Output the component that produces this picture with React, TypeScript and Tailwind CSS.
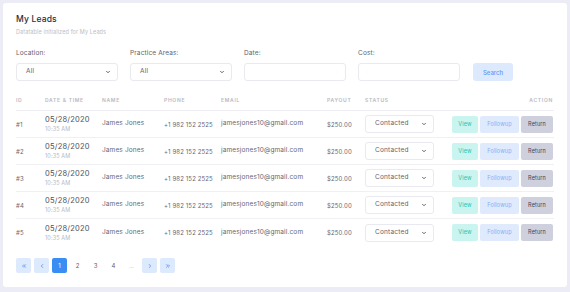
import { ChevronDown, ChevronLeft, ChevronRight, ChevronsLeft, ChevronsRight } from "lucide-react"

const leads = [1, 2, 3, 4, 5].map((n) => ({
  id: `#${n}`,
  date: "05/28/2020",
  time: "10:35 AM",
  name: "James Jones",
  phone: "+1 982 152 2525",
  email: "jamesjones10@gmail.com",
  payout: "$250.00",
  status: "Contacted",
}))

const cols = "grid grid-cols-[29px_57px_62px_57px_106px_38px_87px_101px] items-center"

function FakeSelect({ value, className }: { value: string; className?: string }) {
  return (
    <div
      className={`flex h-[18px] items-center justify-between rounded-[3px] border border-[#e9e9f0] bg-white pl-[9px] pr-[6px] text-[6.5px] tracking-[0.03em] text-[#62626e] ${className ?? ""}`}
    >
      <span>{value}</span>
      <ChevronDown className="h-[6px] w-[6px] text-[#333]" strokeWidth={3} />
    </div>
  )
}

function Field({ label, children }: { label: string; children: React.ReactNode }) {
  return (
    <div className="flex w-[102px] flex-none flex-col gap-[5px]">
      <span className="h-[10px] text-[6.5px] leading-[10px] tracking-[0.02em] text-[#62626e]">{label}</span>
      {children}
    </div>
  )
}

function PageBtn({ children }: { children: React.ReactNode }) {
  return (
    <button className="flex h-[15px] w-[15px] flex-none items-center justify-center rounded-[2px] bg-[#dde9fc] text-[#4a8ef2]">
      {children}
    </button>
  )
}

export default function App() {
  return (
    <div className="min-h-[292px] w-[570px] bg-[#ececf6] p-[3px] font-['Inter',sans-serif]">
      <div className="flex h-[284px] flex-col rounded-[3px] bg-white px-[13px] pt-[10px]">
        <h1 className="text-[8.5px] font-medium leading-[12px] tracking-[0.02em] text-[#2d2d3a]">My Leads</h1>
        <p className="mt-[3px] text-[5.5px] leading-[8px] tracking-[0.02em] text-[#bdbdc8]">Datatable initialized for My Leads</p>

        <div className="mt-[12px] flex items-end gap-[12px]">
          <Field label="Location:">
            <FakeSelect value="All" />
          </Field>
          <Field label="Practice Areas:">
            <FakeSelect value="All" />
          </Field>
          <Field label="Date:">
            <div className="h-[18px] rounded-[3px] border border-[#e9e9f0] bg-white" />
          </Field>
          <Field label="Cost:">
            <div className="h-[18px] rounded-[3px] border border-[#e9e9f0] bg-white" />
          </Field>
          <button className="ml-[1px] h-[18px] w-[40px] flex-none rounded-[3px] bg-[#dde9fc] text-[6px] font-medium text-[#5b9bf6]">
            Search
          </button>
        </div>

        <div className={`${cols} mt-[10px] h-[20px] border-b border-[#eeeef3] text-[5px] font-semibold tracking-[0.14em] text-[#b8b8c3]`}>
          <span>ID</span>
          <span>DATE &amp; TIME</span>
          <span>NAME</span>
          <span>PHONE</span>
          <span>EMAIL</span>
          <span>PAYOUT</span>
          <span>STATUS</span>
          <span className="text-right">ACTION</span>
        </div>

        {leads.map((l, i) => (
          <div
            key={l.id}
            className={`${cols} h-[27px] text-[6.5px] tracking-[0.02em] text-[#676773] ${i < leads.length - 1 ? "border-b border-[#f0f0f4]" : ""}`}
          >
            <span className="text-[6px]">{l.id}</span>
            <div className="flex flex-col">
              <span className="text-[7.5px] leading-[10px] tracking-[0.03em] text-[#50505c]">{l.date}</span>
              <span className="text-[5.5px] leading-[8px] text-[#b8b8c3]">{l.time}</span>
            </div>
            <span>{l.name}</span>
            <span className="text-[6px]">{l.phone}</span>
            <span>{l.email}</span>
            <span className="text-[6px]">{l.payout}</span>
            <FakeSelect value={l.status} className="w-[69px]" />
            <div className="flex justify-end gap-[2px]">
              <button className="h-[17px] w-[26px] rounded-[2px] bg-[#c9f4ef] text-[5.5px] text-[#2cc2ac]">View</button>
              <button className="h-[17px] w-[39px] rounded-[2px] bg-[#dfeafd] text-[5.5px] text-[#84aef5]">Followup</button>
              <button className="h-[17px] w-[32px] rounded-[2px] bg-[#cfd0dd] text-[5.5px] text-[#44444f]">Return</button>
            </div>
          </div>
        ))}

        <div className="mt-[12px] flex items-center gap-[3px] text-[6px]">
          <PageBtn>
            <ChevronsLeft className="h-[6px] w-[6px]" strokeWidth={3} />
          </PageBtn>
          <PageBtn>
            <ChevronLeft className="h-[6px] w-[6px]" strokeWidth={3} />
          </PageBtn>
          <button className="h-[15px] w-[15px] flex-none rounded-[2px] bg-[#3a8df3] text-white">1</button>
          <span className="w-[15px] flex-none text-center text-[#62626e]">2</span>
          <span className="w-[15px] flex-none text-center text-[#62626e]">3</span>
          <span className="w-[15px] flex-none text-center text-[#62626e]">4</span>
          <span className="w-[15px] flex-none text-center text-[#b0b0b8]">...</span>
          <PageBtn>
            <ChevronRight className="h-[6px] w-[6px]" strokeWidth={3} />
          </PageBtn>
          <PageBtn>
            <ChevronsRight className="h-[6px] w-[6px]" strokeWidth={3} />
          </PageBtn>
        </div>
      </div>
    </div>
  )
}
